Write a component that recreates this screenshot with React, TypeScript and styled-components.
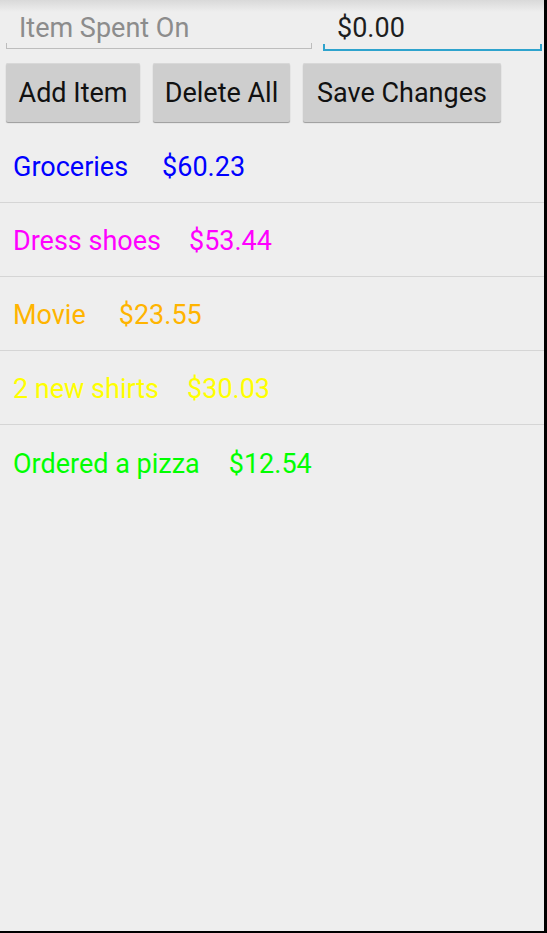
import React from "react";
import styled, { createGlobalStyle } from "styled-components";

const Global = createGlobalStyle`
  html, body { margin: 0; padding: 0; background: #000; }
  body { font-family: Roboto, "Noto Sans", Arial, sans-serif; }
`;

const Screen = styled.div`
  width: 544px;
  height: 931px;
  background: linear-gradient(to bottom, #d9d9d9 0px, #eeeeee 12px, #eeeeee 100%);
  display: flex;
  flex-direction: column;
  overflow: hidden;
`;

const InputRow = styled.div`
  display: flex;
  gap: 11px;
  padding: 13px 2px 0 6px;
`;

const Field = styled.div<{ $width: number }>`
  width: ${(p) => p.$width}px;
  display: flex;
  flex-direction: column;
`;

const FieldText = styled.div<{ $placeholder?: boolean }>`
  height: 30px;
  line-height: 30px;
  padding-left: ${(p) => (p.$placeholder ? 13 : 14)}px;
  font-size: 27px;
  color: ${(p) => (p.$placeholder ? "#8c8c8c" : "#1e1e1e")};
  white-space: nowrap;
`;

const Underline = styled.div<{ $focused?: boolean }>`
  box-sizing: border-box;
  margin-top: ${(p) => (p.$focused ? 1 : 0)}px;
  height: ${(p) => (p.$focused ? 7 : 6)}px;
  border: solid ${(p) => (p.$focused ? "#2ea3cd" : "#bdbdbd")};
  border-width: 0 ${(p) => (p.$focused ? 2 : 1)}px ${(p) => (p.$focused ? 2 : 1)}px;
  border-top: none;
`;

const ButtonRow = styled.div`
  display: flex;
  gap: 13px;
  padding: 12px 0 0 6px;
`;

const Button = styled.button<{ $width: number }>`
  width: ${(p) => p.$width}px;
  height: 59px;
  box-sizing: border-box;
  background: #cecece;
  border: none;
  border-radius: 2px;
  box-shadow: 0 1px 1px #9a9a9a, inset 0 1px 0 #d8d8d8;
  font-family: Roboto, "Noto Sans", Arial, sans-serif;
  font-size: 27px;
  color: #111;
  padding: 0;
  text-align: center;
`;

const List = styled.div`
  margin-top: 7px;
  display: flex;
  flex-direction: column;
`;

const Row = styled.div<{ $color: string; $gap: number }>`
  height: 74px;
  box-sizing: border-box;
  display: flex;
  align-items: center;
  gap: ${(p) => p.$gap}px;
  padding: 3px 0 0 13px;
  font-size: 27px;
  color: ${(p) => p.$color};
  border-bottom: 1px solid #d5d5d5;
  &:last-child { border-bottom: none; }
`;

const items = [
  { name: "Groceries", price: "$60.23", color: "#0000ff", gap: 34 },
  { name: "Dress shoes", price: "$53.44", color: "#ff00ff", gap: 28 },
  { name: "Movie", price: "$23.55", color: "#ffb400", gap: 33 },
  { name: "2 new shirts", price: "$30.03", color: "#ffff00", gap: 28 },
  { name: "Ordered a pizza", price: "$12.54", color: "#00ff00", gap: 29 },
];

export default function App() {
  return (
    <>
      <Global />
      <Screen>
        <InputRow>
          <Field $width={306}>
            <FieldText $placeholder>Item Spent On</FieldText>
            <Underline />
          </Field>
          <Field $width={219}>
            <FieldText>$0.00</FieldText>
            <Underline $focused />
          </Field>
        </InputRow>
        <ButtonRow>
          <Button $width={134}>Add Item</Button>
          <Button $width={137}>Delete All</Button>
          <Button $width={198}>Save Changes</Button>
        </ButtonRow>
        <List>
          {items.map((it) => (
            <Row key={it.name} $color={it.color} $gap={it.gap}>
              <span>{it.name}</span>
              <span>{it.price}</span>
            </Row>
          ))}
        </List>
      </Screen>
    </>
  );
}
